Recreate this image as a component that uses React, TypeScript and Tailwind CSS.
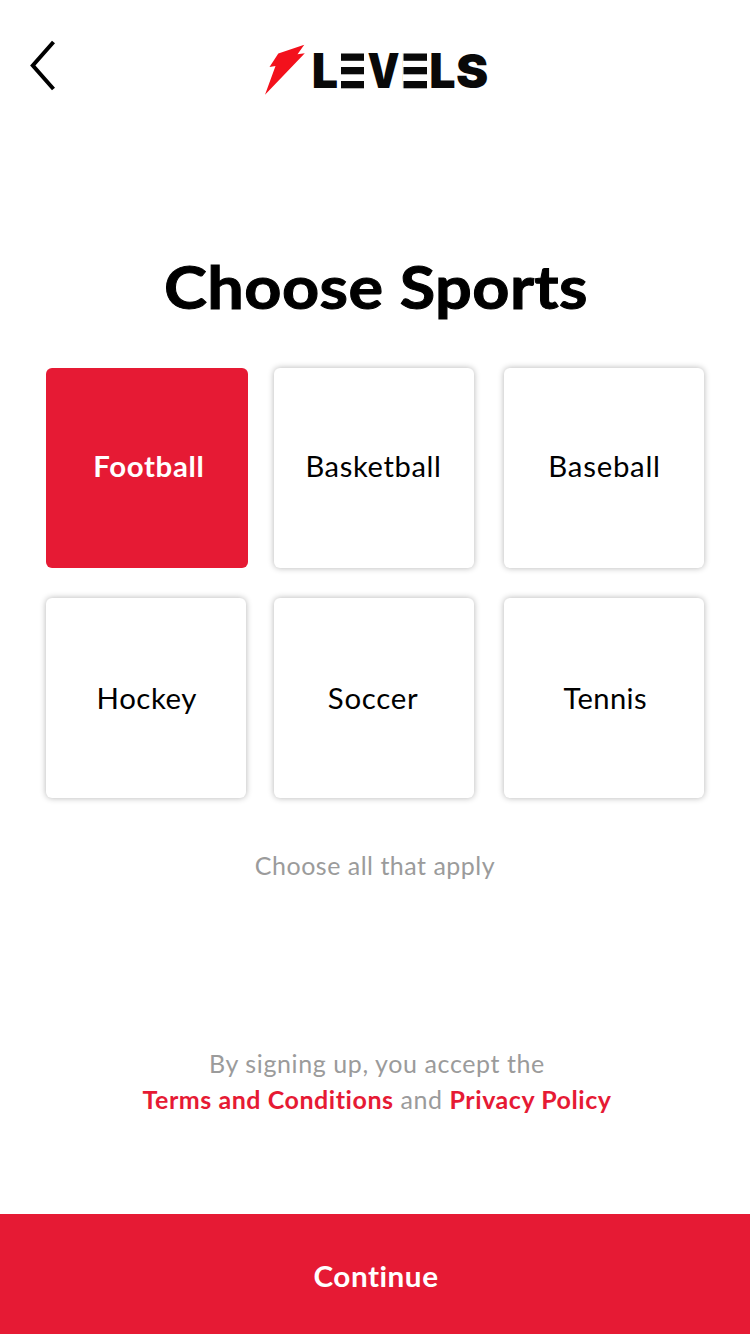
import { useState } from "react";

type Sport = { name: string; place: string };

const rows: Sport[][] = [
  [
    { name: "Football", place: "translate-x-[2px] -translate-y-[2px] tracking-[0.6px] scale-x-[1.05]" },
    { name: "Basketball", place: "-translate-x-[1px] -translate-y-[2px] tracking-[0.6px] scale-x-[1.04]" },
    { name: "Baseball", place: "translate-x-[1px] -translate-y-[2px] tracking-[0.7px] scale-x-[1.05]" },
  ],
  [
    { name: "Hockey", place: "translate-x-[1px] tracking-[0.5px] scale-x-[1.05]" },
    { name: "Soccer", place: "-translate-x-[1px] tracking-[0.7px] scale-x-[1.05]" },
    { name: "Tennis", place: "translate-x-[1px] tracking-[0.4px] scale-x-[1.04]" },
  ],
];

function TripleBar({ x, width }: { x: number; width: number }) {
  return (
    <g>
      <rect x={x - 1} y="52" width={width + 2} height="38" fill="#fff" />
      <rect x={x} y="53.500" width={width} height="7.300" />
      <rect x={x} y="67" width={width} height="7.300" />
      <rect x={x} y="81" width={width} height="7.300" />
    </g>
  );
}

function Logo() {
  return (
    <svg width="230" height="86" viewBox="264 27 230 86" role="img" aria-label="Levels">
      <path d="M304.300 44.700 L278.300 53.500 L269.500 67 L275.500 66 L265 94.700 L304.800 53.200 L297.500 54.300 Z" fill="#f3111c" />
      <g fill="#090909" fontFamily="Inter, sans-serif" fontWeight="900" fontSize="48">
        <text transform="translate(311.800 88.300) scale(0.97 1)">L</text>
        <text transform="translate(339 88.300) scale(0.9 1)">E</text>
        <TripleBar x={341} width={23} />
        <text transform="translate(367.500 88.300) scale(0.84 1)">V</text>
        <text transform="translate(401 88.300) scale(0.9 1)">E</text>
        <TripleBar x={403.500} width={23.500} />
        <text transform="translate(429.300 88.300) scale(0.97 1)">L</text>
        <text transform="translate(456 88) scale(1.01 0.98)">S</text>
      </g>
    </svg>
  );
}

export default function App() {
  const [selected, setSelected] = useState<string[]>(["Football"]);
  const toggle = (s: string) =>
    setSelected((cur) => (cur.includes(s) ? cur.filter((x) => x !== s) : [...cur, s]));

  return (
    <main className="flex h-[1334px] w-[750px] flex-col overflow-hidden bg-white font-['Lato',sans-serif] text-black">
      <header className="flex h-[140px] items-start pl-[30px]">
        <button aria-label="Back" className="mt-[40px] h-[52px] w-[26px]">
          <svg width="26" height="52" viewBox="0 0 26 52" fill="none" stroke="#000" strokeWidth="4">
            <path d="M23.500 2 L2.800 25.500 L23.500 49" />
          </svg>
        </button>
        <div className="mt-[27px] ml-[208px]">
          <Logo />
        </div>
      </header>

      <h1 className="mt-[106px] h-[80px] translate-x-[1px] scale-x-[1.08] text-center text-[60px] leading-[80px] font-bold tracking-[0.4px] [-webkit-text-stroke:1px_#000]">
        Choose Sports
      </h1>

      <section className="mt-[42px] flex flex-col gap-[30px] pl-[46px]">
        {rows.map((row) => (
          <div key={row[0].name} className="grid h-[200px] grid-cols-[228px_230px_200px]">
            {row.map(({ name, place }) => (
              <button
                key={name}
                aria-pressed={selected.includes(name)}
                onClick={() => toggle(name)}
                className={
                  selected.includes(name)
                    ? "h-[200px] w-[202px] rounded-[6px] bg-[#e61a34] text-[28px] font-bold text-white"
                    : "h-[200px] w-[200px] rounded-[6px] bg-white text-[28px] shadow-[0_0_6px_rgba(0,0,0,0.3)]"
                }
              >
                <span className={`inline-block ${place}`}>{name}</span>
              </button>
            ))}
          </div>
        ))}
      </section>

      <p className="mt-[47px] text-center text-[25px] leading-[40px] tracking-[0.5px] text-[#9b9b9b]">Choose all that apply</p>

      <div className="mt-[160px] pl-[4px] text-center text-[25px] leading-[36px] text-[#9b9b9b]">
        <p className="tracking-[0.6px]">By signing up, you accept the</p>
        <p className="tracking-[0.55px]">
          <a className="font-bold text-[#e61a34]">Terms and Conditions</a> and{" "}
          <a className="font-bold text-[#e61a34]">Privacy Policy</a>
        </p>
      </div>

      <button className="mt-auto h-[120px] w-full bg-[#e61a34] pt-[4px] pl-[2px] text-[28px] font-bold text-white">
        <span className="inline-block scale-x-[1.06] tracking-[0.5px]">Continue</span>
      </button>
    </main>
  );
}
